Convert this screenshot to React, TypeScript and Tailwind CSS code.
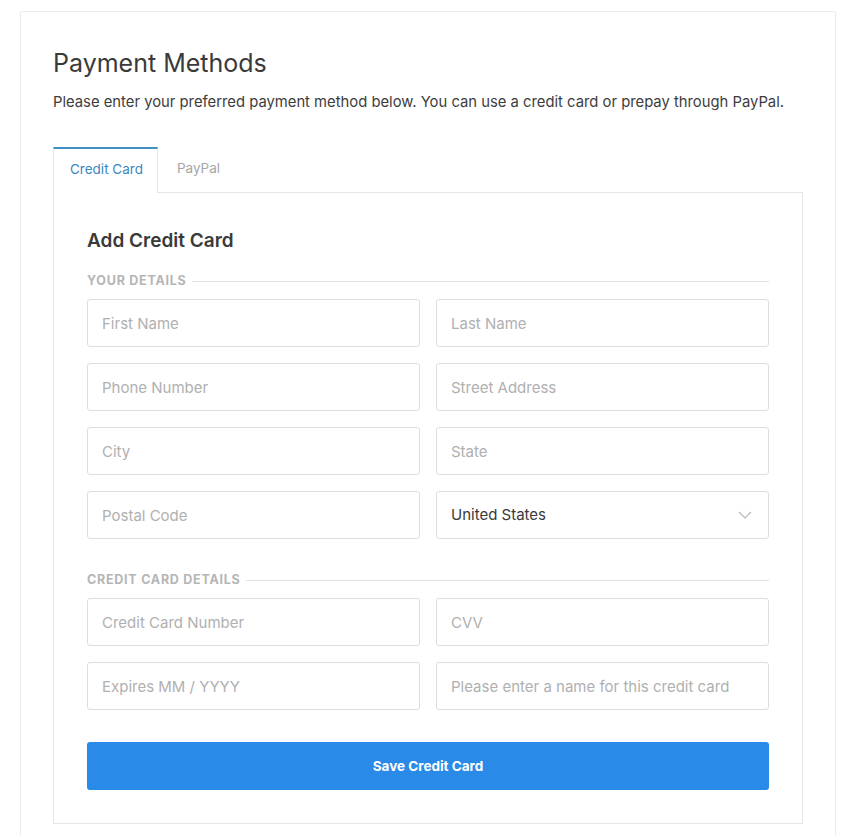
const font = { fontFamily: "Inter, 'Open Sans', sans-serif" };

function Field({ placeholder }: { placeholder: string }) {
  return (
    <input
      type="text"
      placeholder={placeholder}
      className="h-12 w-full rounded-[3px] border border-[#dedede] bg-white px-[14px] text-[15px] text-[#333] outline-none placeholder:text-[#b0b0b0]"
    />
  );
}

function SectionLabel({ children }: { children: string }) {
  return (
    <div className="flex items-center gap-[5px]">
      <span className="text-[12.5px] font-bold uppercase leading-4 tracking-[0.06em] text-[#b5b5b5]">{children}</span>
      <div className="h-px flex-1 bg-[#e3e3e3]" />
    </div>
  );
}

export default function App() {
  return (
    <div className="min-h-screen bg-white pl-5 pt-[11px]" style={font}>
      <div className="w-[816px] rounded-[2px] border border-[#ebebeb] pb-10 pl-8 pr-[32px] pt-[35px]">
        <h1 className="text-[25px] leading-8 text-[#3a3a3a]">Payment Methods</h1>
        <p className="mt-[12px] text-[14.8px] leading-[22px] text-[#3d3d3d]">
          Please enter your preferred payment method below. You can use a credit card or prepay through PayPal.
        </p>

        <div className="mt-[34px] flex">
          <div className="relative z-10 -mb-px flex h-[46px] items-center border-x border-t-2 border-x-[#e6e6e6] border-t-[#3f8fc2] bg-white pb-[3px] pl-4 pr-[14px] text-[13.5px] text-[#3d86bf]">
            Credit Card
          </div>
          <div className="flex h-[45px] items-center px-[19px] pb-[2px] text-[13.5px] text-[#a6a6a6]">PayPal</div>
        </div>

        <div className="border border-[#e6e6e6] px-[33px] pb-[33px] pt-[35px]">
          <h2 className="text-[19px] font-semibold leading-[26px] text-[#3a3a3a]">Add Credit Card</h2>

          <div className="mt-[19px]">
            <SectionLabel>Your Details</SectionLabel>
          </div>
          <div className="mt-[10px] grid grid-cols-2 gap-4">
            <Field placeholder="First Name" />
            <Field placeholder="Last Name" />
            <Field placeholder="Phone Number" />
            <Field placeholder="Street Address" />
            <Field placeholder="City" />
            <Field placeholder="State" />
            <Field placeholder="Postal Code" />
            <div className="flex h-12 items-center justify-between rounded-[3px] border border-[#dedede] bg-white pl-[14px] pr-[16px] text-[15px] text-[#3a3a3a]">
              <span>United States</span>
              <svg width="14" height="8" viewBox="0 0 14 8" fill="none">
                <path d="M1 1l6 6 6-6" stroke="#b8b8b8" strokeWidth="1.2" />
              </svg>
            </div>
          </div>

          <div className="mt-[33px]">
            <SectionLabel>Credit Card Details</SectionLabel>
          </div>
          <div className="mt-[10px] grid grid-cols-2 gap-4">
            <Field placeholder="Credit Card Number" />
            <Field placeholder="CVV" />
            <Field placeholder="Expires MM / YYYY" />
            <Field placeholder="Please enter a name for this credit card" />
          </div>

          <button
            type="button"
            className="mt-8 h-12 w-full rounded-[3px] bg-[#2a8ae8] text-[13.5px] font-bold text-white"
          >
            Save Credit Card
          </button>
        </div>
      </div>
    </div>
  );
}
